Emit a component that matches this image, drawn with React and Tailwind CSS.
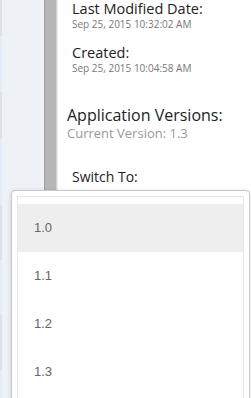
export default function App() {
  const versions = ['1.0', '1.1', '1.2', '1.3'];
  return (
    <div className="relative w-[251px] h-[398px] overflow-hidden flex bg-white" style={{ fontFamily: '"Open Sans", sans-serif' }}>
      <div className="flex w-[44px] shrink-0 bg-[#eef1f5]">
        <div className="flex w-[2px] flex-col">
          <div className="h-[36px] bg-[#dde1e6]" />
          <div className="h-[56px] bg-[#e3edf9]" />
          <div className="h-[47px] bg-[#dde1e6]" />
          <div className="h-[66px] bg-[#e3edf9]" />
          <div className="h-[55px] bg-[#dde1e6]" />
          <div className="h-[55px] bg-[#e3edf9]" />
          <div className="h-[55px] bg-[#dde1e6]" />
          <div className="flex-1 bg-[#e3edf9]" />
        </div>
      </div>
      <div className="w-[13px] shrink-0 border-l border-r border-l-[#9f9f9f] border-r-[#d2d2d2] bg-[#b6b6b6]" />
      <div className="flex-1 border-l border-[#ececec] pl-[14px] text-[#222]">
        <div className="text-[14.5px] leading-[18px]">Last Modified Date:</div>
        <div className="text-[10px] leading-[12px] text-[#777]">Sep 25, 2015 10:32:02 AM</div>
        <div className="mt-[14px] text-[14.5px] leading-[18px]">Created:</div>
        <div className="text-[10px] leading-[12px] text-[#777]">Sep 25, 2015 10:04:58 AM</div>
        <div className="-ml-[5px] mt-[31px] text-[16px] leading-[20px]">Application Versions:</div>
        <div className="-ml-[5px] text-[13px] leading-[16px] text-[#999]">Current Version: 1.3</div>
        <div className="mt-[27px] text-[14px] font-medium leading-[18px]">Switch To:</div>
      </div>
      <div className="absolute left-[11px] top-[190px] w-[239px] h-[230px] rounded-[4px] border border-[#c8c8c8] bg-white px-[5px] pt-[5px] shadow-[0_1px_4px_rgba(0,0,0,0.15)]">
        <div className="h-full border border-b-0 border-[#e6e6e6] bg-white pt-[7px]">
          {versions.map((v, i) => (
            <div key={v} className={`flex h-[48px] items-center pl-[16px] text-[13px] text-[#666] ${i === 0 ? 'bg-[#eeeeee]' : ''}`} style={{ fontFamily: '"Liberation Sans", sans-serif' }}>
              {v}
            </div>
          ))}
        </div>
      </div>
    </div>
  );
}
